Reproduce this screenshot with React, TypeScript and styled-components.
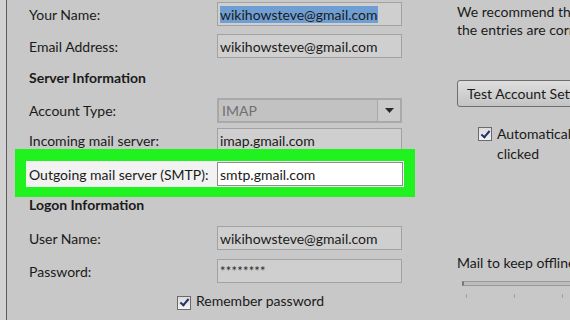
import styled, { createGlobalStyle } from "styled-components";

const GlobalStyle = createGlobalStyle`
  html, body {
    margin: 0;
    padding: 0;
    background: #c8c8c8;
  }
  body {
    font-family: Lato, "Open Sans", sans-serif;
    color: #1a1a1a;
  }
`;

interface FieldProps {
  label: string;
  value: string;
  gap: number;
  selected?: boolean;
}

function Field({ label, value, gap, selected }: FieldProps) {
  return (
    <Row $gap={gap}>
      <Label>{label}</Label>
      <Input>{selected ? <Selected>{value}</Selected> : value}</Input>
    </Row>
  );
}

export default function App(): React.ReactElement {
  return (
    <>
      <GlobalStyle />
      <Page>
        <Edge />
        <LeftColumn>
          <Field gap={0} label="Your Name:" value="wikihowsteve@gmail.com" selected />
          <Field gap={8} label="Email Address:" value="wikihowsteve@gmail.com" />
          <Heading $gap={7}>Server Information</Heading>
          <Row $gap={9}>
            <Label>Account Type:</Label>
            <SelectBox>
              <SelectValue>IMAP</SelectValue>
              <SelectButton>
                <svg width="9" height="5" viewBox="0 0 9 5">
                  <path d="M0 0h9L4.5 5z" fill="#2a2a2a" />
                </svg>
              </SelectButton>
            </SelectBox>
          </Row>
          <Field gap={6} label="Incoming mail server:" value="imap.gmail.com" />
          <Highlight>
            <HighlightRow>
              <Label>Outgoing mail server (SMTP):</Label>
              <Input $white>smtp.gmail.com</Input>
            </HighlightRow>
          </Highlight>
          <Heading $gap={-3} $short>
            Logon Information
          </Heading>
          <Field gap={12} label="User Name:" value="wikihowsteve@gmail.com" />
          <Row $gap={9}>
            <Label>Password:</Label>
            <Input>
              <Stars>********</Stars>
            </Input>
          </Row>
          <CheckRow $indent={148} $gap={8}>
            <CheckBox />
            <span>Remember password</span>
          </CheckRow>
        </LeftColumn>
        <RightColumn>
          <Note>
            We recommend that you test your account to ensure that
            <br />
            the entries are correct.
          </Note>
          <TestButton>Test Account Settings ...</TestButton>
          <CheckRow $indent={21} $gap={17} $top>
            <CheckBox />
            <span>
              Automatically test account settings when Next is
              <br />
              clicked
            </span>
          </CheckRow>
          <Note $offset={90}>Mail to keep offline: All</Note>
          <Slider>
            <Track />
            <Ticks>
              <Tick />
              <Tick />
              <Tick />
            </Ticks>
          </Slider>
        </RightColumn>
      </Page>
    </>
  );
}

const Page = styled.div`
  width: 570px;
  height: 320px;
  overflow: hidden;
  display: flex;
  font-size: 14px;
`;

const Edge = styled.div`
  width: 6px;
  flex-shrink: 0;
  background: #d2d2d2;
  border-right: 1px solid #5e5e5e;
`;

const LeftColumn = styled.div`
  width: 393px;
  flex-shrink: 0;
  padding-left: 22px;
  padding-top: 2px;
  display: flex;
  flex-direction: column;
`;

const Row = styled.div<{ $gap?: number }>`
  display: grid;
  grid-template-columns: 188px 185px;
  align-items: center;
  height: 24px;
  margin-top: ${(p) => p.$gap ?? 0}px;
`;

const Label = styled.span`
  white-space: nowrap;
`;

const Input = styled.div<{ $white?: boolean }>`
  box-sizing: border-box;
  height: 24px;
  border: 1px solid ${(p) => (p.$white ? "#8c8c8c" : "#a2a2a2")};
  background: ${(p) => (p.$white ? "#ffffff" : "#cfcfcf")};
  padding: 0 2px;
  display: flex;
  align-items: center;
  white-space: nowrap;
  overflow: hidden;
`;

const Selected = styled.span`
  background: #6f9fd2;
  line-height: 17px;
`;

const Stars = styled.span`
  font-size: 13px;
  color: #2a2a2a;
  letter-spacing: 0.2px;
`;

const Heading = styled.div<{ $gap: number; $short?: boolean }>`
  font-weight: 700;
  height: ${(p) => (p.$short ? 20 : 24)}px;
  display: flex;
  align-items: center;
  margin-top: ${(p) => p.$gap}px;
`;

const SelectBox = styled.div`
  box-sizing: border-box;
  height: 25px;
  border: 2px solid #a9a9a9;
  background: #c2c2c2;
  display: flex;
`;

const SelectValue = styled.div`
  flex: 1;
  padding-left: 3px;
  display: flex;
  align-items: center;
  color: #707070;
`;

const SelectButton = styled.div`
  width: 22px;
  border-left: 1px solid #a9a9a9;
  background: #cacaca;
  display: flex;
  align-items: center;
  justify-content: center;
`;

const Highlight = styled.div`
  margin: -3px 0 0 -14px;
  width: 378px;
  padding: 12px 11px 10px;
  background: #1ff21f;
`;

const HighlightRow = styled(Row)`
  background: #f2f2f2;
  padding-left: 3px;
  grid-template-columns: 188px 186px;
  height: 26px;
`;

const CheckRow = styled.div<{ $indent: number; $gap: number; $top?: boolean }>`
  display: flex;
  align-items: ${(p) => (p.$top ? "flex-start" : "center")};
  gap: 5px;
  margin-top: ${(p) => p.$gap}px;
  padding-left: ${(p) => p.$indent}px;
  line-height: 20px;
  white-space: nowrap;
`;

const CheckBox = styled.span`
  box-sizing: border-box;
  width: 14px;
  height: 14px;
  margin-top: 3px;
  flex-shrink: 0;
  border: 1px solid #6a6a6a;
  background: linear-gradient(#dcdcdc, #f2f2f2);
  display: flex;
  align-items: center;
  justify-content: center;
  &::after {
    content: "";
    width: 3px;
    height: 7px;
    margin-top: -2px;
    border: solid #20306a;
    border-width: 0 2px 2px 0;
    transform: rotate(40deg);
  }
`;

const RightColumn = styled.div`
  padding-left: 35px;
  padding-top: 3px;
  display: flex;
  flex-direction: column;
  white-space: nowrap;
`;

const Note = styled.div<{ $offset?: number }>`
  line-height: 18px;
  margin-top: ${(p) => p.$offset ?? 0}px;
`;

const TestButton = styled.div`
  margin-top: 41px;
  width: 180px;
  height: 27px;
  box-sizing: border-box;
  border: 1px solid #6e6e6e;
  border-radius: 3px;
  background: linear-gradient(#dedede, #c4c4c4);
  padding-left: 9px;
  display: flex;
  align-items: center;
`;

const Slider = styled.div`
  margin-top: 9px;
  padding-left: 5px;
`;

const Track = styled.div`
  height: 3px;
  width: 140px;
  border: 1px solid #9a9a9a;
  border-left: 2px solid #777;
  background: #bdbdbd;
`;

const Ticks = styled.div`
  display: flex;
  gap: 47px;
  padding-left: 4px;
  margin-top: 8px;
`;

const Tick = styled.span`
  width: 1px;
  height: 4px;
  background: #a0a0a0;
`;
